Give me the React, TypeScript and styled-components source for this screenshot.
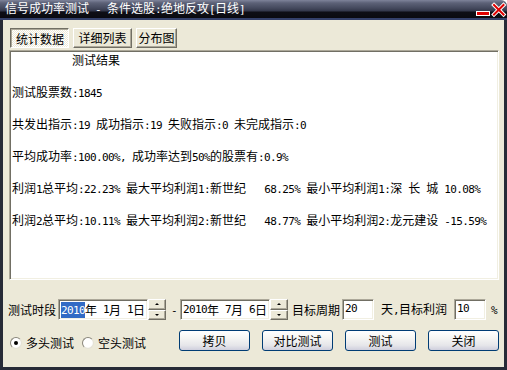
import React from "react";
import styled, { createGlobalStyle } from "styled-components";

const Global = createGlobalStyle`
  html, body { margin: 0; padding: 0; background: #ffffff; }
  body { width: 507px; height: 370px; overflow: hidden; }
  * { box-sizing: border-box; }
`;

const CJK = `"Noto Sans CJK SC", "Noto Sans", sans-serif`;

const Half = styled.span`
  font-family: "DejaVu Sans Mono", "Liberation Mono", monospace;
  font-size: 11px;
  letter-spacing: -0.62px;
`;

const Sel = styled.span`
  background: #316ac5;
  color: #fff;
`;

function Mixed({ text }: { text: string }) {
  const parts = text.match(/[\x00-\x7f]+|[^\x00-\x7f]+/g) || [];
  return (
    <>
      {parts.map((p, i) =>
        /^[\x00-\x7f]/.test(p) ? <Half key={i}>{p}</Half> : <span key={i}>{p}</span>
      )}
    </>
  );
}

const Window = styled.div`
  width: 507px;
  height: 370px;
  display: flex;
  flex-direction: column;
  font-family: ${CJK};
  font-size: 12px;
  color: #000;
  border-top-right-radius: 6px;
  overflow: hidden;
  background: #ece9d8;
`;

const TitleBar = styled.div`
  height: 20px;
  flex: none;
  display: flex;
  align-items: center;
  justify-content: space-between;
  padding-left: 5px;
  background: linear-gradient(
    180deg,
    #7e839a 0px,
    #5c6177 3px,
    #454a5e 8px,
    #33374a 11px,
    #0e0e15 12px,
    #0a0a10 18px,
    #34406a 18px,
    #34406a 20px
  );
  color: #fff;
  line-height: 18px;
`;

const TitleText = styled.div`
  padding-bottom: 2px;
  white-space: pre;
`;

const Controls = styled.svg`
  flex: none;
  align-self: flex-start;
`;

const Frame = styled.div`
  flex: 1;
  display: flex;
  flex-direction: column;
  border: 3px solid #272b37;
  border-top: none;
  padding: 8px 5px 0 5px;
`;

const TabRow = styled.div`
  display: flex;
  gap: 4px;
  margin-left: 2px;
  height: 20px;
`;

const Tab = styled.div<{ $w: number; $active?: boolean }>`
  width: ${(p) => p.$w}px;
  height: 20px;
  display: flex;
  align-items: center;
  justify-content: center;
  line-height: 14px;
  border: 1px solid;
  ${(p) =>
    p.$active
      ? `
    border-color: #716f64 #ffffff #ffffff #716f64;
    box-shadow: inset 1px 1px 0 #aca899;
    background: repeating-conic-gradient(#ffffff 0 25%, #ece9d8 0 50%) 0 0 / 2px 2px;
    padding: 1px 0 0 1px;
  `
      : `
    border-color: #ffffff #716f64 #716f64 #ffffff;
    box-shadow: inset -1px -1px 0 #aca899;
    background: #ece9d8;
  `}
`;

const TextArea = styled.div`
  margin: 2px 0 0 1px;
  height: 230px;
  width: 490px;
  background: #fff;
  border: 1px solid;
  border-color: #aca899 #ffffff #ffffff #aca899;
  box-shadow: inset 1px 1px 0 #716f64, inset -1px -1px 0 #f1efe2;
  padding: 1px 0 0 2px;
`;

const Line = styled.div`
  line-height: 16px;
  height: 16px;
  margin-bottom: 16px;
  white-space: pre;
`;

const Row = styled.div<{ $mt: number; $pl?: number }>`
  display: flex;
  align-items: center;
  height: 21px;
  margin-top: ${(p) => p.$mt}px;
  padding-left: ${(p) => p.$pl || 0}px;
  white-space: pre;
`;

const Label = styled.span<{ $ml?: number }>`
  margin-left: ${(p) => p.$ml || 0}px;
  line-height: 14px;
`;

const Sunken = styled.div<{ $w: number; $ml?: number }>`
  width: ${(p) => p.$w}px;
  height: 21px;
  margin-left: ${(p) => p.$ml || 0}px;
  background: #fff;
  border: 1px solid;
  border-color: #aca899 #ffffff #ffffff #aca899;
  box-shadow: inset 1px 1px 0 #716f64, inset -1px -1px 0 #f1efe2;
  display: flex;
  align-items: center;
  padding-left: 2px;
  line-height: 14px;
`;

const InputBox = styled(Sunken)`
  align-items: flex-start;
  padding-top: 2px;
`;

const Spinner = styled.div`
  width: 18px;
  height: 21px;
  display: flex;
  flex-direction: column;
`;

const SpinBtn = styled.div<{ $down?: boolean }>`
  flex: 1;
  background: #ece9d8;
  border: 1px solid;
  border-color: #ffffff #716f64 #716f64 #ffffff;
  box-shadow: inset -1px -1px 0 #aca899;
  display: flex;
  align-items: center;
  justify-content: center;
  &::after {
    content: "";
    width: 0;
    height: 0;
    border-left: 2px solid transparent;
    border-right: 2px solid transparent;
    ${(p) =>
      p.$down ? `border-top: 2px solid #000;` : `border-bottom: 2px solid #000;`}
  }
`;

const Dash = styled.span`
  margin: 0 3px 0 5px;
  width: 6px;
  line-height: 14px;
`;

const RadioGroup = styled.div`
  display: flex;
  align-items: center;
  padding-top: 5px;
  margin-left: 2px;
`;

const RadioItem = styled.label<{ $ml?: number }>`
  display: flex;
  align-items: center;
  gap: 4px;
  margin-left: ${(p) => p.$ml || 0}px;
  line-height: 14px;
`;

const RadioDot = styled.span<{ $checked?: boolean }>`
  width: 12px;
  height: 12px;
  border-radius: 50%;
  border: 1px solid;
  border-color: #8a877c #e4e2d6 #e4e2d6 #8a877c;
  background: radial-gradient(circle at 45% 45%, #ffffff 55%, #e8e6de 100%);
  display: flex;
  align-items: center;
  justify-content: center;
  &::after {
    content: "";
    width: 4px;
    height: 4px;
    border-radius: 50%;
    background: ${(p) => (p.$checked ? "#000" : "transparent")};
  }
`;

const ButtonGroup = styled.div`
  display: flex;
  gap: 12px;
  margin-left: auto;
`;

const Button = styled.div`
  width: 71px;
  height: 21px;
  border: 1px solid #003c74;
  border-radius: 3px;
  background: linear-gradient(180deg, #ffffff 0%, #f6f6f4 35%, #e6e6ea 75%, #cfcfdd 100%);
  display: flex;
  align-items: center;
  justify-content: center;
  line-height: 14px;
`;

const lines = [
  "          测试结果",
  "测试股票数:1845",
  "共发出指示:19 成功指示:19 失败指示:0 未完成指示:0",
  "平均成功率:100.00%, 成功率达到50%的股票有:0.9%",
  "利润1总平均:22.23% 最大平均利润1:新世纪   68.25% 最小平均利润1:深 长 城 10.08%",
  "利润2总平均:10.11% 最大平均利润2:新世纪   48.77% 最小平均利润2:龙元建设 -15.59%",
];

export default function App() {
  return (
    <>
      <Global />
      <Window>
        <TitleBar>
          <TitleText>
            <Mixed text="信号成功率测试 - 条件选股:绝地反攻[日线]" />
          </TitleText>
          <Controls width="32" height="20" viewBox="0 0 32 20">
            <rect x="1.5" y="11.5" width="13" height="4" fill="#e00000" stroke="#ffffff" strokeWidth="1" />
            <g strokeLinecap="square">
              <line x1="19" y1="5" x2="28.5" y2="14.5" stroke="#ffffff" strokeWidth="4" />
              <line x1="28.5" y1="5" x2="19" y2="14.5" stroke="#ffffff" strokeWidth="4" />
              <line x1="19" y1="5" x2="28.5" y2="14.5" stroke="#e00000" strokeWidth="2" />
              <line x1="28.5" y1="5" x2="19" y2="14.5" stroke="#e00000" strokeWidth="2" />
            </g>
          </Controls>
        </TitleBar>
        <Frame>
          <TabRow>
            <Tab $w={59} $active>统计数据</Tab>
            <Tab $w={59}>详细列表</Tab>
            <Tab $w={41}>分布图</Tab>
          </TabRow>
          <TextArea>
            {lines.map((l, i) => (
              <Line key={i}>
                <Mixed text={l} />
              </Line>
            ))}
          </TextArea>
          <Row $mt={19}>
            <Label>测试时段</Label>
            <Sunken $w={90} $ml={2}>
              <Sel>
                <Half>2010</Half>
              </Sel>
              <Mixed text="年 1月 1日" />
            </Sunken>
            <Spinner>
              <SpinBtn />
              <SpinBtn $down />
            </Spinner>
            <Dash>
              <Half>-</Half>
            </Dash>
            <Sunken $w={90}>
              <Mixed text="2010年 7月 6日" />
            </Sunken>
            <Spinner>
              <SpinBtn />
              <SpinBtn $down />
            </Spinner>
            <Label $ml={4}>目标周期</Label>
            <InputBox $w={32} $ml={2}>
              <Half>20</Half>
            </InputBox>
            <Label $ml={7}>
              <Mixed text="天,目标利润" />
            </Label>
            <InputBox $w={32} $ml={7}>
              <Half>10</Half>
            </InputBox>
            <Label $ml={5}>
              <Half>%</Half>
            </Label>
          </Row>
          <Row $mt={10}>
            <RadioGroup>
              <RadioItem>
                <RadioDot $checked />
                多头测试
              </RadioItem>
              <RadioItem $ml={8}>
                <RadioDot />
                空头测试
              </RadioItem>
            </RadioGroup>
            <ButtonGroup>
              <Button>拷贝</Button>
              <Button>对比测试</Button>
              <Button>测试</Button>
              <Button>关闭</Button>
            </ButtonGroup>
          </Row>
        </Frame>
      </Window>
    </>
  );
}
